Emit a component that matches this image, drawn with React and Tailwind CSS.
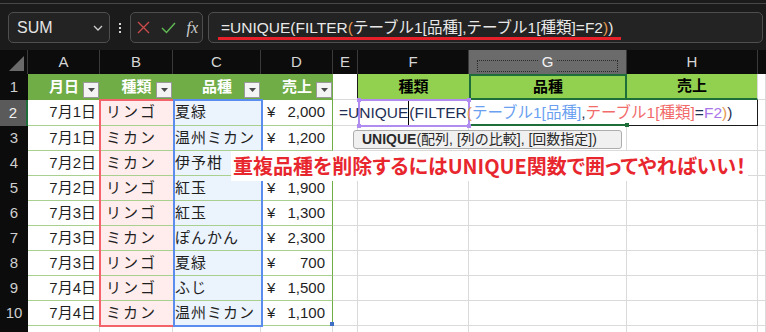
import React from 'react';

// row 4's sales cell sits under the annotation box, so it is left blank
const rows = [
  { date: '7月1日', kind: 'リンゴ', variety: '夏緑', sales: '2,000' },
  { date: '7月1日', kind: 'ミカン', variety: '温州ミカン', sales: '1,200' },
  { date: '7月2日', kind: 'ミカン', variety: '伊予柑', sales: '' },
  { date: '7月2日', kind: 'リンゴ', variety: '紅玉', sales: '1,900' },
  { date: '7月3日', kind: 'リンゴ', variety: '紅玉', sales: '1,300' },
  { date: '7月3日', kind: 'ミカン', variety: 'ぽんかん', sales: '2,300' },
  { date: '7月3日', kind: 'リンゴ', variety: '夏緑', sales: '700' },
  { date: '7月4日', kind: 'リンゴ', variety: 'ふじ', sales: '1,500' },
  { date: '7月4日', kind: 'ミカン', variety: '温州ミカン', sales: '1,100' },
];

const FilterButton = () => (
  <span className="absolute right-[1px] bottom-[2px] flex h-4 w-4 items-center justify-center border border-[#9a9a9a] bg-[#f4f4f4]">
    <svg width="7" height="4" viewBox="0 0 7 4"><path d="M0 0h7L3.5 4z" fill="#4a4a4a" /></svg>
  </span>
);

const RowHead = ({ n, active }) => (
  <div className={`flex items-center justify-center text-[15px] ${active ? 'bg-[#5a5a5a] text-[#f0f0f0] border-r-2 border-[#1e6e3a]' : 'bg-[#0c0c0c] text-[#cfcfcf]'}`}>
    {n}
  </div>
);

const Blank = () => <div className="bg-white border-b border-r border-[#dadada]" />;

const App = () => {
  return (
    <div className="w-[766px] h-[332px] overflow-hidden bg-[#1b1b1b] font-['Liberation_Sans','Noto_Sans_CJK_JP',sans-serif] relative">
      {/* formula bar */}
      <div className="h-[50px] pt-[3px]">
        <div className="h-px bg-[#474747]" />
        <div className="mt-[8px] flex h-[31px] items-stretch">
          <div className="ml-2 flex w-[102px] items-center justify-between rounded-[5px] border border-[#4e4e4e] bg-[#232323] pl-[8px] pr-[6px] text-[16px] text-[#e4e4e4]">
            <span>SUM</span>
            <svg width="10" height="6" viewBox="0 0 10 6"><path d="M1 1l4 4 4-4" fill="none" stroke="#cfcfcf" strokeWidth="1.3" /></svg>
          </div>
          <div className="flex w-[20px] flex-col items-center justify-center gap-[2px]">
            <span className="h-[2px] w-[2px] bg-[#d8d8d8]" />
            <span className="h-[2px] w-[2px] bg-[#d8d8d8]" />
            <span className="h-[2px] w-[2px] bg-[#d8d8d8]" />
          </div>
          <div className="flex w-[73px] items-center justify-between rounded-[5px] border border-[#4e4e4e] bg-[#232323] pl-[6px] pr-[4px]">
            <svg width="13" height="13" viewBox="0 0 13 13"><path d="M1 1l11 11M12 1L1 12" stroke="#c94a4a" strokeWidth="1.4" /></svg>
            <svg width="15" height="12" viewBox="0 0 15 12"><path d="M1 6l4.5 4.5L14 1" fill="none" stroke="#5fb653" strokeWidth="1.5" /></svg>
            <span className="font-['Liberation_Serif',serif] text-[16px] italic text-[#cfcfcf]">fx</span>
          </div>
          <div className="relative ml-[5px] flex w-[555px] items-center rounded-[5px] border border-[#4e4e4e] bg-[#232323] pl-[12px] text-[15.5px] text-[#e8e8e8]">
            <span className="whitespace-nowrap">
              =UNIQUE(FILTER<span className="text-[#e59a52]">(</span>テーブル1[品種],テーブル1[種類]=F2<span className="text-[#e59a52]">)</span>)
            </span>
            <div className="absolute left-[9px] top-[24px] h-[3px] w-[403px] bg-[#e8202a]" />
          </div>
        </div>
      </div>

      {/* sheet */}
      <div className="grid grid-cols-[28px_72px_73px_88px_72px_25px_111px_158px_131px_1fr] grid-rows-[24px_26px_26px_25px_25px_25px_25px_25px_25px_25px_25px_25px] text-[15px] text-[#1f1f1f]">
        {/* column headers */}
        <div className="relative bg-[#0c0c0c] border-r border-[#3a3a3a]">
          <svg className="absolute right-[3px] bottom-[3px]" width="15" height="15" viewBox="0 0 15 15"><path d="M15 0v15H0z" fill="#6a6a6a" /></svg>
        </div>
        {['A', 'B', 'C', 'D', 'E', 'F'].map((c) => (
          <div key={c} className="flex items-center justify-center bg-[#0c0c0c] border-r border-[#3a3a3a] text-[#d6d6d6]">{c}</div>
        ))}
        <div className="relative flex items-center justify-center bg-[#6b6b6b] border-r border-[#3a3a3a] text-[#f2f2f2]">
          <div className="absolute left-[8px] right-[8px] top-[10px] bottom-[2px] border border-dotted border-[#2c2c2c]" />
          <span className="relative bg-[#6b6b6b] px-1">G</span>
        </div>
        <div className="flex items-center justify-center bg-[#0c0c0c] border-r border-[#3a3a3a] text-[#d6d6d6]">H</div>
        <div className="bg-[#0c0c0c]" />

        {/* row 1 */}
        <RowHead n="1" />
        {['月日', '種類', '品種', '売上'].map((h) => (
          <div key={h} className="relative flex items-center justify-center bg-[#70ad47] font-bold text-white">
            {h}
            <FilterButton />
          </div>
        ))}
        <div className="bg-white border-r border-[#1a1a1a] border-b border-b-[#dadada]" />
        <div className="flex items-center justify-center bg-[#92d050] font-bold text-black">種類</div>
        <div className="flex items-center justify-center bg-[#92d050] border-2 border-[#1e6e3a] font-bold text-black">品種</div>
        <div className="flex items-center justify-center bg-[#92d050] border-b-2 border-[#1e6e3a] border-r border-r-[#dadada] font-bold text-black">売上</div>
        <Blank />

        {/* data rows */}
        {rows.map((r, i) => (
          <React.Fragment key={i}>
            <RowHead n={i + 2} active={i === 0} />
            <div className="flex items-center justify-end bg-white border-b border-[#a9d08e] pr-[4px]">{r.date}</div>
            <div className="flex items-center bg-[#ffecec] border-b border-[#a9d08e] pl-[6px] tracking-[2px]">{r.kind}</div>
            <div className="flex items-center bg-[#ebf3fd] border-b border-[#a9d08e] pl-[2px] tracking-[1px]">{r.variety}</div>
            <div className="flex items-center justify-between bg-white border-b border-r border-[#a9d08e] border-r-[#70ad47] pl-[6px] pr-[7px]">
              {r.sales && (
                <>
                  <span>¥</span>
                  <span>{r.sales}</span>
                </>
              )}
            </div>
            {i === 0 ? (
              <>
                <div className="bg-white border-b border-[#dadada]" />
                <div className="bg-white border-b border-[#dadada]" />
                <div className="bg-white border-b-2 border-[#1e6e3a]" />
                <div className="bg-white border-b border-r border-[#1a1a1a]" />
                <Blank />
              </>
            ) : (
              <>
                <Blank />
                <Blank />
                <Blank />
                <Blank />
                <Blank />
              </>
            )}
          </React.Fragment>
        ))}

        {/* row 11, only its top edge is in view */}
        <RowHead n="" />
        {[0, 1, 2, 3, 4, 5, 6, 7, 8].map((k) => (
          <Blank key={k} />
        ))}
      </div>

      {/* reference highlight boxes */}
      <div className="pointer-events-none absolute left-[99px] top-[99px] h-[228px] w-[76px] border-2 border-[#f2636b]" />
      <div className="pointer-events-none absolute left-[173px] top-[99px] h-[228px] w-[90px] border-2 border-[#5b8def]" />
      <div className="pointer-events-none absolute left-[330px] top-[322px] h-[4px] w-[4px] bg-[#3f6fc4]" />
      <div className="pointer-events-none absolute left-[358px] top-[99px] h-[28px] w-[112px] border-2 border-[#b18cf0]">
        <span className="absolute -left-[3px] -top-[3px] h-[4px] w-[4px] bg-[#b18cf0]" />
        <span className="absolute -right-[3px] -top-[3px] h-[4px] w-[4px] bg-[#b18cf0]" />
        <span className="absolute -left-[3px] -bottom-[3px] h-[4px] w-[4px] bg-[#b18cf0]" />
        <span className="absolute -right-[3px] -bottom-[3px] h-[4px] w-[4px] bg-[#b18cf0]" />
      </div>
      <div className="absolute left-[625px] top-[123px] h-[4px] w-[4px] bg-[#1e6e3a]" />

      {/* in-cell editing text */}
      <div className="absolute left-[339px] top-[100px] flex h-[26px] items-center whitespace-nowrap text-[15.5px] text-[#1f2f55]">
        <span>=UNIQUE</span>
        <span className="h-[24px] w-px bg-black" />
        <span>(FILTER</span>
        <span className="text-[#e59a52]">(</span>
        <span className="text-[#6b9ff0]">テーブル1[品種]</span>
        <span>,</span>
        <span className="text-[#f26b6b]">テーブル1[種類]</span>
        <span>=</span>
        <span className="text-[#a874e8]">F2</span>
        <span className="text-[#e59a52]">)</span>
        <span>)</span>
      </div>

      {/* function tooltip */}
      <div className="absolute left-[353px] top-[130px] flex h-[19px] w-[269px] items-center rounded-[3px] border border-[#adadad] bg-[#f0f0f0] pl-[8px] text-[14px] text-[#2a2a2a] whitespace-nowrap">
        <span className="font-bold">UNIQUE</span>
        <span>(配列, [列の比較], [回数指定])</span>
      </div>

      {/* annotation */}
      <div className="absolute left-[231px] top-[151px] flex h-[30px] items-center bg-white px-[2px] whitespace-nowrap font-['Noto_Sans_CJK_JP',sans-serif] text-[20px] font-bold text-[#e8262e] [font-feature-settings:'palt']">
        重複品種を削除するにはUNIQUE関数で囲ってやればいい！
      </div>
    </div>
  );
};

export default App;
